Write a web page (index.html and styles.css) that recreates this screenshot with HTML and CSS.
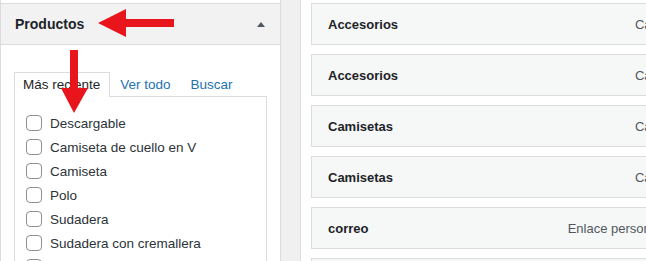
FILE: index.html
```html
<!DOCTYPE html>
<html>
  <head>
    <title>Menús</title>
    <meta charset="utf-8">
    <link rel="stylesheet" href="styles.css">
  </head>
  <body>
    <div class="screen">
      <div class="sidebar">
        <div class="section">
          <h3 class="section-title">Productos <span class="toggle"></span></h3>
          <div class="section-body">
            <ul class="tabs">
              <li class="tab active">Más reciente</li>
              <li class="tab"><a href="#">Ver todo</a></li>
              <li class="tab"><a href="#">Buscar</a></li>
            </ul>
            <div class="tab-panel">
              <ul class="checklist">
                <li><label><input type="checkbox"> Descargable</label></li>
                <li><label><input type="checkbox"> Camiseta de cuello en V</label></li>
                <li><label><input type="checkbox"> Camiseta</label></li>
                <li><label><input type="checkbox"> Polo</label></li>
                <li><label><input type="checkbox"> Sudadera</label></li>
                <li><label><input type="checkbox"> Sudadera con cremallera</label></li>
                <li><label><input type="checkbox"> Gorra</label></li>
              </ul>
            </div>
          </div>
        </div>
      </div>
      <div class="divider"></div>
      <div class="main">
        <ul class="menu-items">
          <li class="menu-item"><span class="item-title">Accesorios</span><span class="item-type">Categoría</span></li>
          <li class="menu-item"><span class="item-title">Accesorios</span><span class="item-type">Categoría</span></li>
          <li class="menu-item"><span class="item-title">Camisetas</span><span class="item-type">Categoría</span></li>
          <li class="menu-item"><span class="item-title">Camisetas</span><span class="item-type">Categoría</span></li>
          <li class="menu-item"><span class="item-title">correo</span><span class="item-type">Enlace personalizado</span></li>
          <li class="menu-item"><span class="item-title">Inicio</span><span class="item-type">Página</span></li>
        </ul>
      </div>

      <!-- flechas de anotación -->
      <svg class="arrows" width="646" height="261" viewBox="0 0 646 261">
        <polygon points="174,19 126,19 126,9 98,23 126,37 126,27 174,27" />
        <polygon points="70,50 78,50 78,88 88,88 74,113 61,88 70,88" />
      </svg>
    </div>
  </body>
</html>
```

FILE: styles.css
```css
body {
  margin: 0;
  background-color: #fff;
  font-family: "Liberation Sans", Arial, sans-serif;
  overflow: hidden;
}
ul {
  list-style: none;
  margin: 0;
  padding: 0;
}
.screen {
  position: relative;
  display: flex;
  height: 261px;
  overflow: hidden;
}

/* columna izquierda */
.sidebar {
  box-sizing: border-box;
  width: 281px;
  flex-shrink: 0;
  padding-top: 3px;
  border-left: 1px solid #dcdcde;
  border-right: 1px solid #dcdcde;
}
.section-title {
  box-sizing: border-box;
  display: flex;
  align-items: center;
  height: 42px;
  margin: 0;
  padding: 0 15px 0 14px;
  border-top: 1px solid #dcdcde;
  border-bottom: 1px solid #dcdcde;
  background-color: #f2f2f3;
  color: #1d2327;
  font-size: 14px;
  font-weight: bold;
}
.toggle {
  margin-left: auto;
  width: 0;
  height: 0;
  border-left: 4px solid transparent;
  border-right: 4px solid transparent;
  border-bottom: 5px solid #50575e;
}
.section-body {
  padding: 27px 13px 0 13px;
}
.tabs {
  display: flex;
  align-items: flex-end;
}
.tab {
  box-sizing: border-box;
  height: 24px;
  padding: 4px 10px 0 10px;
  font-size: 13.5px;
  line-height: 18px;
}
.tab a {
  color: #2271b1;
  text-decoration: none;
}
.tab.active {
  position: relative;
  z-index: 1;
  height: 25px;
  margin-bottom: -1px;
  padding: 3px 9px 0 8px;
  border: 1px solid #dcdcde;
  border-bottom: none;
  background-color: #fff;
  color: #1d2327;
}
.tab-panel {
  height: 200px;
  padding: 14px 0 0 11px;
  border: 1px solid #dcdcde;
  background-color: #fff;
}
.checklist li {
  height: 24px;
}
.checklist label {
  display: flex;
  align-items: center;
  gap: 8px;
  height: 24px;
  color: #2c3338;
  font-size: 13.5px;
}
.checklist input {
  appearance: none;
  box-sizing: border-box;
  width: 16px;
  height: 16px;
  margin: 0;
  border: 1px solid #8c8f94;
  border-radius: 4px;
  background-color: #fff;
}

/* franja central */
.divider {
  width: 19px;
  flex-shrink: 0;
  background-color: #f0f0f1;
}

/* columna derecha */
.main {
  flex: 1;
  padding: 3px 0 0 10px;
  border-left: 1px solid #dcdcde;
}
.menu-item {
  box-sizing: border-box;
  display: flex;
  align-items: center;
  width: 420px;
  height: 42px;
  margin-bottom: 9px;
  padding: 0 38px 0 16px;
  border: 1px solid #dcdcde;
  background-color: #f6f7f7;
  font-size: 13px;
}
.item-title {
  color: #1d2327;
  font-weight: bold;
}
.item-type {
  margin-left: auto;
  color: #50575e;
}

.arrows {
  position: absolute;
  z-index: 2;
  left: 0;
  top: 0;
  pointer-events: none;
  fill: #e8151d;
}
```
